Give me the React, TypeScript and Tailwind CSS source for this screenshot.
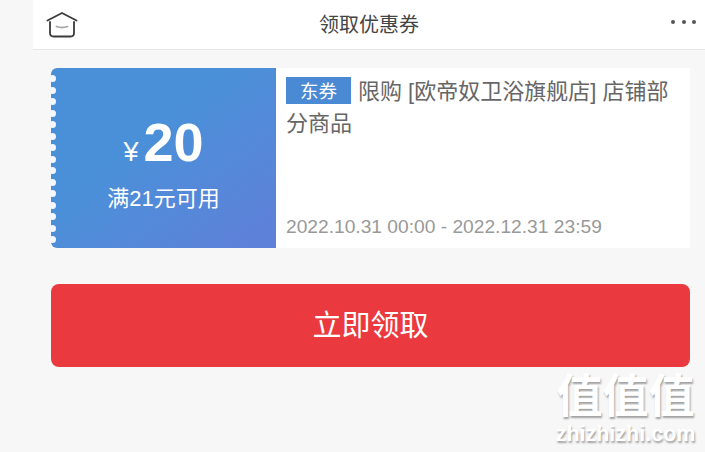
import React from 'react';

const FONT = "font-['Liberation_Sans','Noto_Sans_CJK_SC',sans-serif]";

const HomeIcon = () => (
  <svg width="32" height="26" viewBox="0 0 32 26" fill="none" stroke="#3a3a3a" strokeWidth="1.8" strokeLinecap="round" strokeLinejoin="round">
    <path d="M1.5 8.5 L16 1 L30.5 8.5" />
    <path d="M4 10 V21 Q4 24.5 7.5 24.5 H24.5 Q28 24.5 28 21 V10" />
    <path d="M10.5 14.5 Q16 16.5 21.5 14.5" stroke="#a8a8a8" />
  </svg>
);

const App: React.FC = () => {
  return (
    <div className={`${FONT} relative w-[705px] h-[452px] overflow-hidden bg-[#f7f7f7]`}>
      <header className="ml-[33px] h-[50px] bg-white border-b border-[#e6e6e6] flex items-center justify-between pl-[13px] pr-[9px]">
        <HomeIcon />
        <span className="text-[20px] text-[#444] ml-[-11px]">领取优惠券</span>
        <div className="flex gap-[6.5px] pb-[6px]">
          <span className="w-[4px] h-[4px] rounded-full bg-[#555]" />
          <span className="w-[4px] h-[4px] rounded-full bg-[#555]" />
          <span className="w-[4px] h-[4px] rounded-full bg-[#555]" />
        </div>
      </header>

      <div className="pl-[51px] pr-[15px] pt-[18px]">
        <div className="flex h-[180px] bg-white">
          <div className="relative w-[225px] rounded-l-[6px] bg-gradient-to-br from-[#4a90d9] from-40% to-[#5f7fd8] flex flex-col items-center justify-center text-white">
            <div className="absolute left-[-2px] top-0 bottom-0 flex flex-col justify-between pt-[7px] pb-[5px]">
              {Array.from({ length: 15 }).map((_, i) => (
                <span key={i} className="w-[7px] h-[7px] rounded-full bg-[#f4f7fb]" />
              ))}
            </div>
            <div className="flex items-baseline mt-[10px]">
              <span className="text-[27px] mr-[5px]">¥</span>
              <span className="text-[54px] leading-[60px] font-bold">20</span>
            </div>
            <div className="text-[22px] leading-[30px] mt-[11px]">满21元可用</div>
          </div>

          <div className="flex-1 flex flex-col justify-between pl-[10px] pr-[15px] pt-[8px] pb-[9px]">
            <p className="text-[22px] leading-[32px] text-[#666]">
              <span className="inline-block w-[65px] h-[27px] bg-[#4a8ad4] text-white text-[18.5px] leading-[29px] text-center align-[1px] mr-[7px]">东券</span>
              限购 [欧帝奴卫浴旗舰店] 店铺部分商品
            </p>
            <div className="text-[19.2px] leading-[24px] text-[#999]">2022.10.31 00:00 - 2022.12.31 23:59</div>
          </div>
        </div>

        <button className="mt-[36px] w-full h-[83px] pt-[3px] rounded-[8px] bg-[#ea3a3f] text-white text-[29px]">立即领取</button>
      </div>

      <div className="absolute left-[553px] top-[370px] w-[145px] flex flex-col items-center text-white [text-shadow:1px_2px_2px_rgba(0,0,0,0.35)]">
        <div className="text-[46px] leading-[52px] font-bold whitespace-nowrap">值值值</div>
        <div className="text-[21.5px] leading-[24px] font-bold whitespace-nowrap">zhizhizhi.com</div>
      </div>
    </div>
  );
};

export default App;
